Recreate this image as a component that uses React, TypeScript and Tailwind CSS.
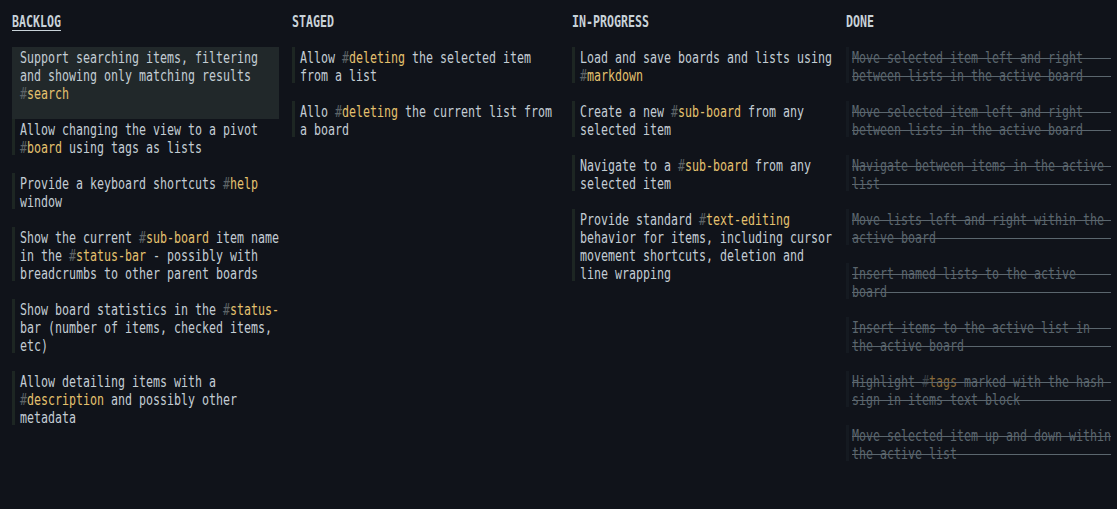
import React from "react";

type Card = { lines: string[]; selected?: boolean };
type Column = {
  title: string;
  active?: boolean;
  done?: boolean;
  width: string;
  cards: Card[];
};

const columns: Column[] = [
  {
    title: "BACKLOG",
    active: true,
    width: "w-[280px]",
    cards: [
      {
        selected: true,
        lines: [
          "Support searching items, filtering",
          "and showing only matching results",
          "#search",
        ],
      },
      { lines: ["Allow changing the view to a pivot", "#board using tags as lists"] },
      { lines: ["Provide a keyboard shortcuts #help", "window"] },
      {
        lines: [
          "Show the current #sub-board item name",
          "in the #status-bar - possibly with",
          "breadcrumbs to other parent boards",
        ],
      },
      {
        lines: [
          "Show board statistics in the #status-",
          "bar (number of items, checked items,",
          "etc)",
        ],
      },
      {
        lines: [
          "Allow detailing items with a",
          "#description and possibly other",
          "metadata",
        ],
      },
    ],
  },
  {
    title: "STAGED",
    width: "w-[280px]",
    cards: [
      { lines: ["Allow #deleting the selected item", "from a list"] },
      { lines: ["Allo #deleting the current list from", "a board"] },
    ],
  },
  {
    title: "IN-PROGRESS",
    width: "w-[274px]",
    cards: [
      { lines: ["Load and save boards and lists using", "#markdown"] },
      { lines: ["Create a new #sub-board from any", "selected item"] },
      { lines: ["Navigate to a #sub-board from any", "selected item"] },
      {
        lines: [
          "Provide standard #text-editing",
          "behavior for items, including cursor",
          "movement shortcuts, deletion and",
          "line wrapping",
        ],
      },
    ],
  },
  {
    title: "DONE",
    done: true,
    width: "flex-1",
    cards: [
      { lines: ["Move selected item left and right", "between lists in the active board"] },
      { lines: ["Move selected item left and right", "between lists in the active board"] },
      { lines: ["Navigate between items in the active", "list"] },
      { lines: ["Move lists left and right within the", "active board"] },
      { lines: ["Insert named lists to the active", "board"] },
      { lines: ["Insert items to the active list in", "the active board"] },
      { lines: ["Highlight #tags marked with the hash", "sign in items text block"] },
      { lines: ["Move selected item up and down within", "the active list"] },
    ],
  },
];

const MONO = "font-['DejaVu_Sans_Mono',monospace]";

function Line({ text, done }: { text: string; done?: boolean }) {
  const padded = done ? text.padEnd(37, " ") : text;
  const parts = padded.split(/(#[A-Za-z-]+)/g);
  return (
    <div className="h-[18px] w-[259px] leading-[18px] whitespace-pre">
      <span
        className={`inline-block origin-left [transform:translateY(1px)_scaleX(0.7752)] text-[15px] leading-[18px] ${MONO} ${
          done ? "text-[#5b666e] line-through decoration-[#5b666e]" : "text-[#c3cdd4]"
        }`}
      >
        {parts.map((p, i) =>
          p.startsWith("#") ? (
            <React.Fragment key={i}>
              <span className={done ? "text-[#3a4148]" : "text-[#5d6468]"}>#</span>
              <span className={done ? "text-[#8a6b3c]" : "text-[#e4c16e]"}>{p.slice(1)}</span>
            </React.Fragment>
          ) : (
            <React.Fragment key={i}>{p}</React.Fragment>
          )
        )}
      </span>
    </div>
  );
}

function CardView({ card, done }: { card: Card; done?: boolean }) {
  if (card.selected) {
    return (
      <div className="w-[267px] bg-[#21282a] pl-[8px] pb-[18px]">
        {card.lines.map((l, i) => (
          <Line key={i} text={l} />
        ))}
      </div>
    );
  }
  return (
    <div
      className={`mb-[18px] border-l-[3px] ${
        done ? "border-[#151a21] pl-[3px]" : "border-[#1d2623] pl-[5px]"
      }`}
    >
      {card.lines.map((l, i) => (
        <Line key={i} text={l} done={done} />
      ))}
    </div>
  );
}

export default function App() {
  return (
    <div className="flex h-[509px] w-full overflow-hidden bg-[#10131a] pl-[12px] pt-[11px]">
      {columns.map((col) => (
        <div key={col.title} className={`${col.width} shrink-0 flex flex-col`}>
          <div className="h-[18px] leading-[18px] whitespace-pre">
            <span
              className={`inline-block origin-left [transform:translateY(1px)_scaleX(0.7752)] text-[15px] font-bold leading-[18px] text-[#c8d2d8] ${MONO} ${
                col.active ? "underline decoration-1 underline-offset-[3px]" : ""
              }`}
            >
              {col.title}
            </span>
          </div>
          <div className="mt-[18px] flex flex-col">
            {col.cards.map((c, i) => (
              <CardView key={i} card={c} done={col.done} />
            ))}
          </div>
        </div>
      ))}
    </div>
  );
}
